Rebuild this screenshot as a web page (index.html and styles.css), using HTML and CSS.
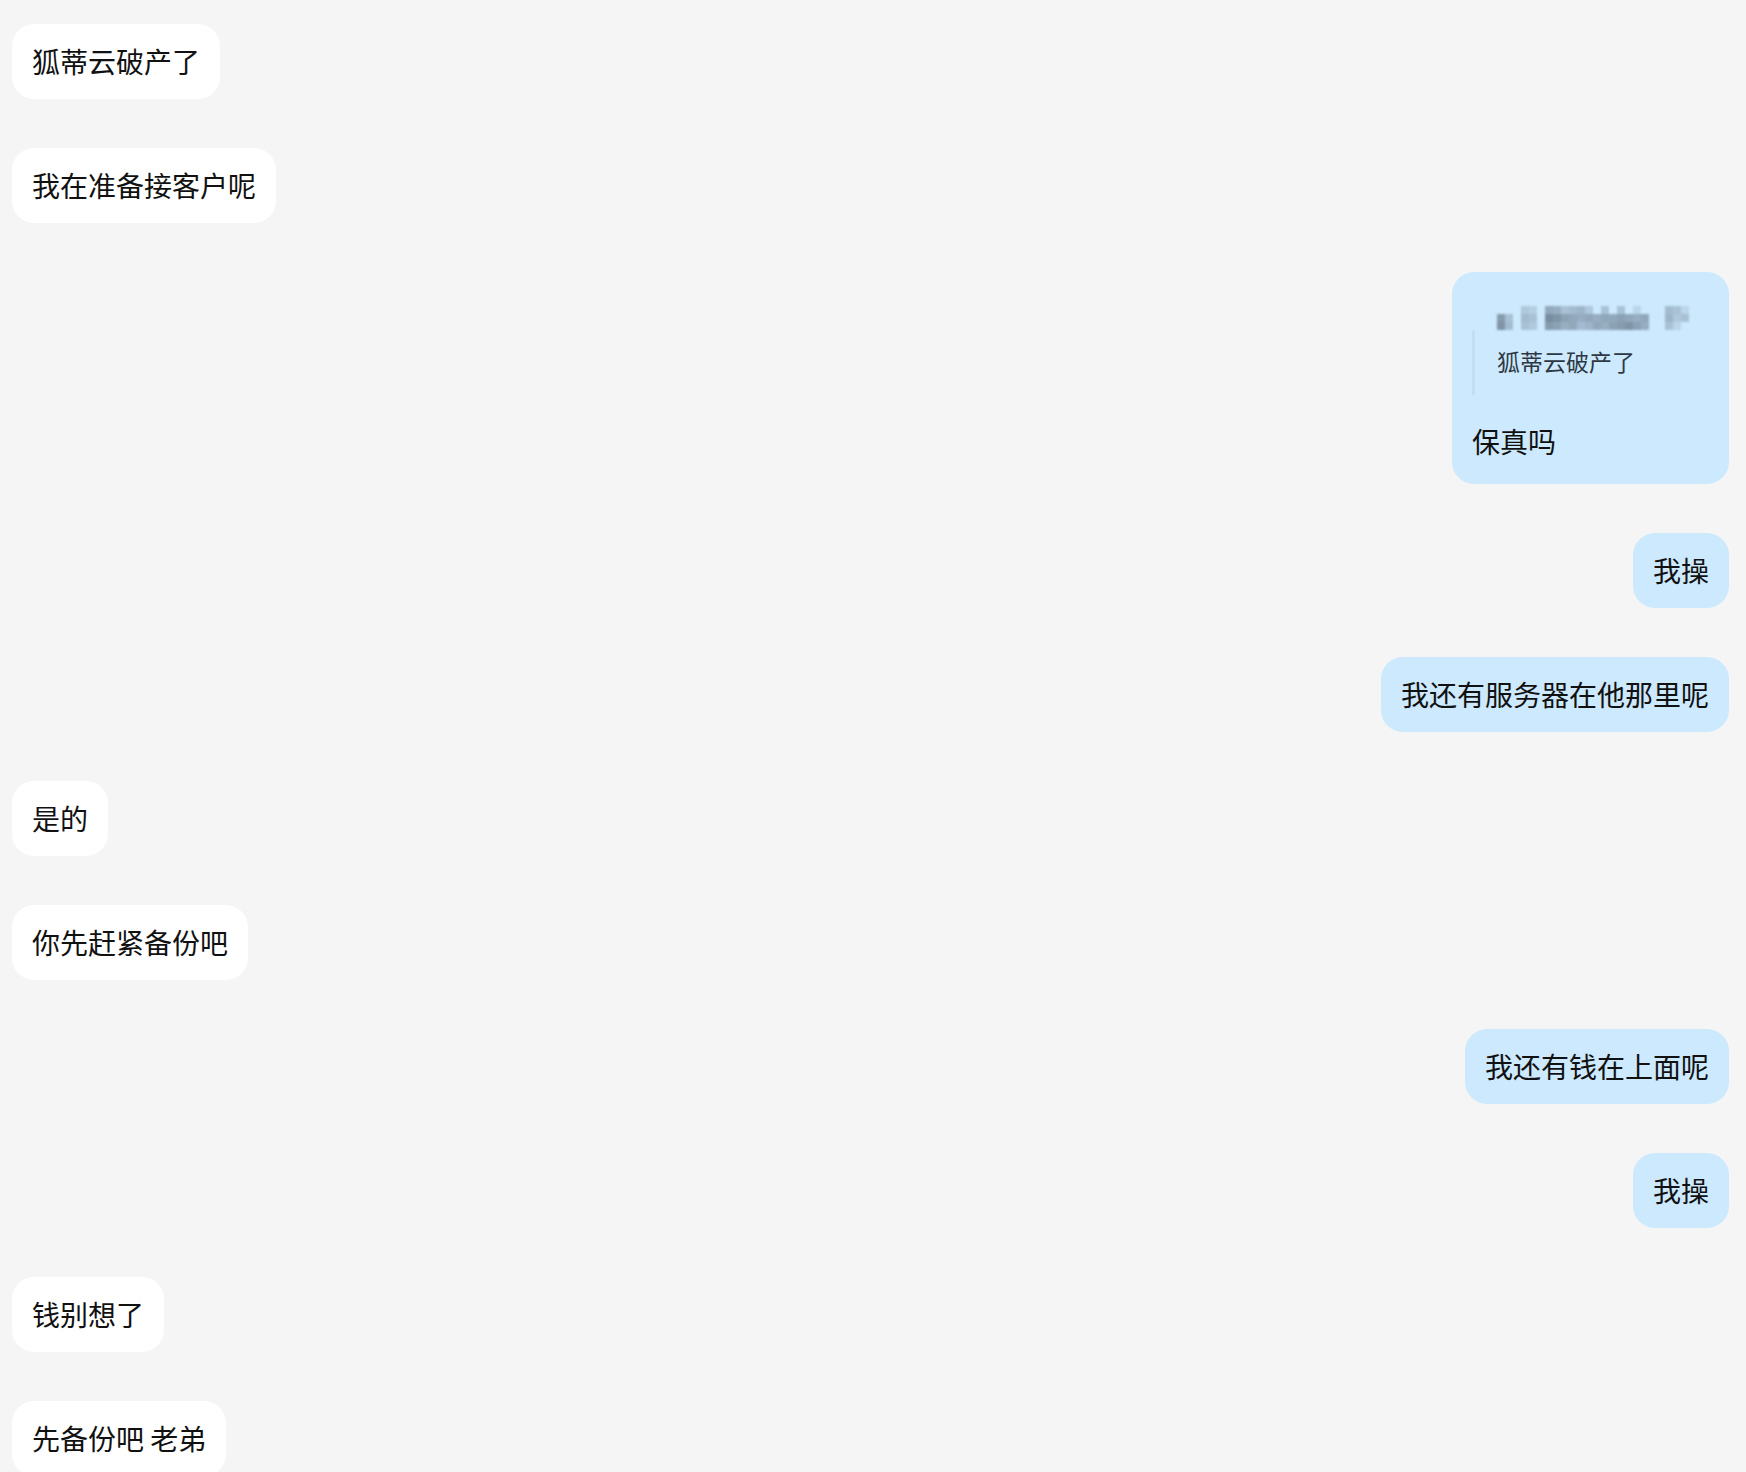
FILE: index.html
```html
<!DOCTYPE html>
<html lang="zh-CN">
<head>
  <meta charset="UTF-8">
  <meta name="viewport" content="width=device-width, initial-scale=1.0">
  <title>聊天记录</title>
  <link rel="stylesheet" href="styles.css">
</head>
<body>
  <div class="chat">
    <div class="msg in"><div class="bubble">狐蒂云破产了</div></div>
    <div class="msg in"><div class="bubble">我在准备接客户呢</div></div>

    <div class="msg out">
      <div class="bubble has-quote">
        <div class="quote">
          <!-- sender name, pixelated -->
          <svg class="quote-name" width="196" height="24" viewBox="0 0 196 24">
            <g fill="#56677a">
              <rect x="24" y="0" width="8" height="8" opacity=".25"/>
              <rect x="32" y="0" width="8" height="8" opacity=".2"/>
              <rect x="48" y="0" width="8" height="8" opacity=".5"/>
              <rect x="56" y="0" width="8" height="8" opacity=".45"/>
              <rect x="64" y="0" width="8" height="8" opacity=".3"/>
              <rect x="72" y="0" width="8" height="8" opacity=".35"/>
              <rect x="80" y="0" width="8" height="8" opacity=".4"/>
              <rect x="88" y="0" width="8" height="8" opacity=".25"/>
              <rect x="104" y="0" width="8" height="8" opacity=".3"/>
              <rect x="120" y="0" width="8" height="8" opacity=".3"/>
              <rect x="136" y="0" width="8" height="8" opacity=".15"/>
              <rect x="168" y="0" width="8" height="8" opacity=".35"/>
              <rect x="176" y="0" width="8" height="8" opacity=".3"/>
              <rect x="184" y="0" width="8" height="8" opacity=".15"/>

              <rect x="0" y="8" width="8" height="8" opacity=".6"/>
              <rect x="8" y="8" width="8" height="8" opacity=".3"/>
              <rect x="24" y="8" width="8" height="8" opacity=".35"/>
              <rect x="32" y="8" width="8" height="8" opacity=".3"/>
              <rect x="48" y="8" width="8" height="8" opacity=".7"/>
              <rect x="56" y="8" width="8" height="8" opacity=".65"/>
              <rect x="64" y="8" width="8" height="8" opacity=".55"/>
              <rect x="72" y="8" width="8" height="8" opacity=".5"/>
              <rect x="80" y="8" width="8" height="8" opacity=".45"/>
              <rect x="88" y="8" width="8" height="8" opacity=".5"/>
              <rect x="96" y="8" width="8" height="8" opacity=".45"/>
              <rect x="104" y="8" width="8" height="8" opacity=".5"/>
              <rect x="112" y="8" width="8" height="8" opacity=".5"/>
              <rect x="120" y="8" width="8" height="8" opacity=".55"/>
              <rect x="128" y="8" width="8" height="8" opacity=".5"/>
              <rect x="136" y="8" width="8" height="8" opacity=".45"/>
              <rect x="144" y="8" width="8" height="8" opacity=".5"/>
              <rect x="168" y="8" width="8" height="8" opacity=".4"/>
              <rect x="176" y="8" width="8" height="8" opacity=".25"/>
              <rect x="184" y="8" width="8" height="8" opacity=".3"/>

              <rect x="0" y="16" width="8" height="8" opacity=".65"/>
              <rect x="8" y="16" width="8" height="8" opacity=".35"/>
              <rect x="24" y="16" width="8" height="8" opacity=".3"/>
              <rect x="32" y="16" width="8" height="8" opacity=".25"/>
              <rect x="48" y="16" width="8" height="8" opacity=".6"/>
              <rect x="56" y="16" width="8" height="8" opacity=".55"/>
              <rect x="64" y="16" width="8" height="8" opacity=".45"/>
              <rect x="72" y="16" width="8" height="8" opacity=".5"/>
              <rect x="80" y="16" width="8" height="8" opacity=".35"/>
              <rect x="88" y="16" width="8" height="8" opacity=".4"/>
              <rect x="96" y="16" width="8" height="8" opacity=".5"/>
              <rect x="104" y="16" width="8" height="8" opacity=".45"/>
              <rect x="112" y="16" width="8" height="8" opacity=".55"/>
              <rect x="120" y="16" width="8" height="8" opacity=".6"/>
              <rect x="128" y="16" width="8" height="8" opacity=".65"/>
              <rect x="136" y="16" width="8" height="8" opacity=".55"/>
              <rect x="144" y="16" width="8" height="8" opacity=".45"/>
              <rect x="168" y="16" width="8" height="8" opacity=".3"/>
              <rect x="176" y="16" width="8" height="8" opacity=".15"/>
            </g>
          </svg>
          <div class="quote-text">狐蒂云破产了</div>
        </div>
        <div class="reply">保真吗</div>
      </div>
    </div>

    <div class="msg out"><div class="bubble">我操</div></div>
    <div class="msg out"><div class="bubble">我还有服务器在他那里呢</div></div>
    <div class="msg in"><div class="bubble">是的</div></div>
    <div class="msg in"><div class="bubble">你先赶紧备份吧</div></div>
    <div class="msg out"><div class="bubble">我还有钱在上面呢</div></div>
    <div class="msg out"><div class="bubble">我操</div></div>
    <div class="msg in"><div class="bubble">钱别想了</div></div>
    <div class="msg in"><div class="bubble">先备份吧 老弟</div></div>
  </div>
</body>
</html>
```

FILE: styles.css
```css
* {
  margin: 0;
  padding: 0;
  box-sizing: border-box;
}

body {
  font-family: "Noto Sans CJK SC", "Noto Sans", sans-serif;
  background: #f5f5f5;
  color: #111;
  height: 100vh;
  overflow: hidden;
}

.chat {
  display: flex;
  flex-direction: column;
  gap: 49px;
  padding: 24px 17px 0 12px;
}

.msg {
  display: flex;
}

.msg.in {
  justify-content: flex-start;
}

.msg.out {
  justify-content: flex-end;
}

.bubble {
  padding: 20px;
  font-size: 28px;
  line-height: 35px;
  border-radius: 22px;
  white-space: nowrap;
}

.msg.in .bubble {
  background: #fff;
}

.msg.out .bubble {
  background: #cde9fd;
}

/* reply with a quoted message on top */
.bubble.has-quote {
  padding: 20px 20px 25px;
}

.quote {
  padding: 14px 16px 0 0;
}

.quote-name {
  display: block;
  margin-left: 25px;
  filter: blur(0.9px);
}

.quote-text {
  margin-top: 1px;
  padding: 15px 0 19px 22px;
  border-left: 3px solid rgba(120, 140, 160, 0.12);
  font-size: 23px;
  line-height: 30px;
  color: #2e3844;
}

.reply {
  margin-top: 29px;
}
```
